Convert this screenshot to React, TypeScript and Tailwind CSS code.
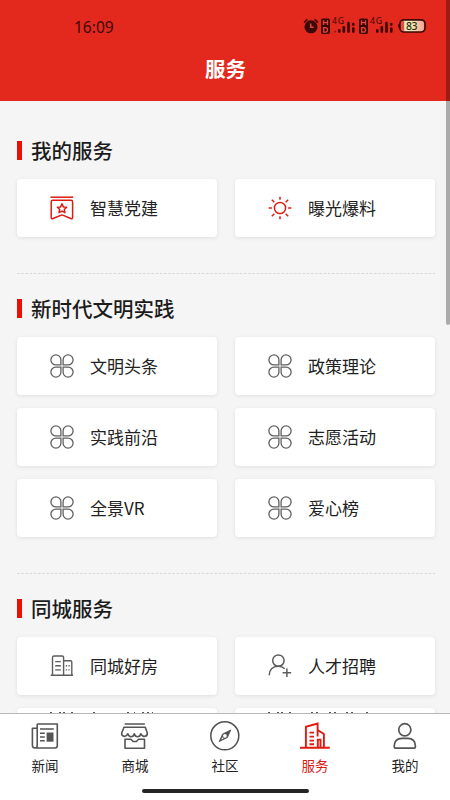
import React from 'react';

const Clover = () => (
  <svg width="24" height="24" viewBox="0 0 24 24" fill="none" stroke="#606060" strokeWidth="1.3">
    <path d="M10.9 10.9H6A5 5 0 1 1 10.9 6z" />
    <path d="M13.1 10.9H18A5 5 0 1 0 13.1 6z" />
    <path d="M10.9 13.1H6A5 5 0 1 0 10.9 18z" />
    <path d="M13.1 13.1H18A5 5 0 1 1 13.1 18z" />
  </svg>
);

const Party = () => (
  <svg width="24" height="24" viewBox="0 0 24 24" fill="none" stroke="#dc1c14" strokeWidth="1.5" strokeLinejoin="round">
    <path d="M.5 1.2H23.2" />
    <path d="M2.8 4.3H21Q22.6 4.3 22.6 5.9V21.3Q22.6 23.3 20.8 22.5L12 18.9L3 22.5Q1.2 23.3 1.2 21.3V5.9Q1.2 4.3 2.8 4.3z" />
    <path d="M12 7.9l1.4 3 3.2.4-2.3 2.2.6 3.2-2.9-1.6-2.9 1.6.6-3.2-2.3-2.2 3.2-.4z" />
  </svg>
);

const Sun = () => (
  <svg width="24" height="24" viewBox="0 0 24 24" fill="none" stroke="#dc1c14" strokeWidth="1.5">
    <circle cx="12" cy="12" r="5.6" />
    <path d="M12 .7v3M12 20.3v3M.7 12h3.2M20.1 12h3.2M3.8 3.8l2.5 2.5M17.7 17.7l2.5 2.5M20.2 3.8l-2.5 2.5M6.3 17.7l-2.5 2.5" />
  </svg>
);

const House = () => (
  <svg width="24" height="24" viewBox="0 0 24 24" fill="none" stroke="#5c5c5c" strokeWidth="1.4" strokeLinejoin="round">
    <path d="M.7 21.3H23M2.5 21.3V3.5Q2.5 2 4 2H12Q13.6 2 13.6 3.5V21.3M13.6 6.8H20.5Q21.8 6.8 21.8 8V21.3M5.2 7.6H10.8M5.2 11.7H10.8M5.2 15.9H10.8M15.8 11.7h1.3M18.4 11.7h1.3M15.8 15.9h1.3M18.4 15.9h1.3" />
  </svg>
);

const Recruit = () => (
  <svg width="24" height="24" viewBox="0 0 24 24" fill="none" stroke="#5c5c5c" strokeWidth="1.5">
    <circle cx="10.4" cy="6.6" r="5.7" />
    <path d="M1.2 21.3C1.2 15.8 4.5 12.3 10.2 12.3C13 12.3 15.2 13.3 16.7 14.8M18.9 14.5V23M14.6 18.8H23.2" />
  </svg>
);

const NewsIcon = () => (
  <svg width="30" height="30" viewBox="0 0 30 30" fill="none" stroke="#555" strokeWidth="1.6" strokeLinejoin="round">
    <path d="M7.2 3H27.3V24.8Q27.3 27 25 27H5.2Q2.4 27 2.4 24.3V7.3H7.2M7.2 3V24.3Q7.2 27 5 27M10 8H23.8M10 12.2H14.8M10 16H14.8M10 19.8H14.8" />
    <path d="M16.6 11.5H23.5V20.7H16.6z" fill="#555" stroke="none" />
  </svg>
);

const ShopIcon = () => (
  <svg width="30" height="30" viewBox="0 0 30 30" fill="none" stroke="#555" strokeWidth="1.6" strokeLinejoin="round">
    <path d="M4.6 3H24.8M4 6.3H25.3L27.3 12C27.8 15.5 22.6 17 20.9 12.8C19.8 16.7 15.3 16.7 14.3 12.8C13.3 16.7 9 16.7 7.8 12.8C6.1 17 1.1 15.5 1.7 12zM5 18.3V27.3H24.5V18.3H18.6L16.4 20.5H13.1L10.9 18.3z" />
  </svg>
);

const CompassIcon = () => (
  <svg width="30" height="30" viewBox="0 0 30 30" fill="none" stroke="#505050" strokeWidth="1.5" strokeLinejoin="round">
    <circle cx="14.8" cy="14.8" r="14" />
    <path d="M20.8 8.9L17.4 16.6L9.2 20.6L12.6 13z" fill="#505050" strokeWidth=".8" />
    <circle cx="14.9" cy="14.8" r="1.9" fill="#fff" stroke="none" />
    <path d="M11.2 18.8l1.4-2.7 1.1 1.2z" fill="#fff" stroke="none" />
  </svg>
);

const ServiceIcon = () => (
  <svg width="30" height="30" viewBox="0 0 30 30" fill="none" stroke="#e01a10" strokeWidth="1.9">
    <path d="M0 26.8H29.8M5.9 26.8V5.8L17.6 2.5V9L23.9 13V26.8M17.6 8.8V15.5M17.8 26.8V18.6H20.5V26.8M9.5 11.6H14M9.5 15.6H14M9.5 19.6H14M9.5 23.3H14" />
  </svg>
);

const MineIcon = () => (
  <svg width="30" height="30" viewBox="0 0 30 30" fill="none" stroke="#555" strokeWidth="1.7" strokeLinejoin="round">
    <circle cx="14.8" cy="8.8" r="6.1" />
    <path d="M6 27.2Q4.1 27.2 4.2 25C4.4 20 7.6 17.3 12 17.3H17.8C22.2 17.3 25.3 20 25.4 25Q25.5 27.2 23.8 27.2z" />
  </svg>
);

const Card = ({ icon, label }: { icon: React.ReactNode; label: string }) => (
  <div className="flex h-[58px] items-center rounded-[4px] bg-white pl-[33px] shadow-[0_1px_4px_rgba(0,0,0,0.09)]">
    {icon}
    <span className="ml-4 text-[17px] leading-6 text-[#222]">{label}</span>
  </div>
);

const PeekCard = ({ marks }: { marks: string }) => (
  <div className="h-[58px] rounded-[4px] bg-white pl-[33px] pt-[4px] shadow-[0_1px_4px_rgba(0,0,0,0.09)]">
    <svg className="block" width="110" height="1" viewBox="0 0 110 1">
      <path d={marks} stroke="#555" strokeWidth="1" />
    </svg>
  </div>
);

const Title = ({ children }: { children: string }) => (
  <h2 className="flex h-[30px] items-center gap-[9px] text-[20.5px] font-medium text-[#1c1c1c]">
    <i className="block h-[19px] w-[5px] bg-[#eb1006]" />
    <span className="leading-[30px]">{children}</span>
  </h2>
);

const Divider = () => (
  <svg className="block h-px w-full" viewBox="0 0 418 1" preserveAspectRatio="none">
    <path d="M0 .5H418" stroke="#d9d9d9" strokeWidth="1" strokeDasharray="2.6 1.6" />
  </svg>
);

const Signal = ({ faint }: { faint?: boolean }) => (
  <svg width="36" height="26" viewBox="0 -4 36 26" fill="#3c0806">
    <rect x="0" y="1.5" width="9" height="15.5" rx="1.8" />
    <path d="M2.5 3.2v4.9M6.5 3.2v4.9M2.5 5.6h4M2.7 10.7v4.5h1.5q2.3 0 2.3-2.25t-2.3-2.25z" fill="none" stroke="#e8453a" strokeWidth="1.3" />
    <text x="11" y="7.4" fontSize="8.6" textLength="12" fontFamily="Noto Sans">4G</text>
    <circle cx="14" cy="14.6" r="1.1" opacity={faint ? 0.45 : 0} />
    <path d="M18.3 13.4v1.2M22.8 10.2v4.4M27.5 6v8.6M32.3 7v.6M32.3 11.6v3" stroke="#3c0806" strokeWidth="2.6" strokeLinecap="round" />
  </svg>
);

const tabs = [
  { label: '新闻', icon: <NewsIcon /> },
  { label: '商城', icon: <ShopIcon /> },
  { label: '社区', icon: <CompassIcon /> },
  { label: '服务', icon: <ServiceIcon />, active: true },
  { label: '我的', icon: <MineIcon /> },
];

export default function App() {
  return (
    <div className="relative flex h-[800px] w-[450px] flex-col overflow-hidden bg-[#f5f5f5] font-['Noto_Sans_CJK_SC',sans-serif]">
      <header className="h-[101px] shrink-0 bg-[#e3281e]">
        <div className="flex h-[52px] items-center pl-[74px]">
          <span className="w-[229px] pt-[2px] font-['Noto_Sans'] text-[15.5px] leading-5 text-[#3c0806]">16:09</span>
          <div className="flex items-center gap-[2px]">
            <svg width="16" height="16" viewBox="0 0 16 16" fill="none" stroke="#3c0806" strokeWidth="1.5">
              <circle cx="8" cy="8.8" r="5.8" fill="#3c0806" />
              <path d="M1.3 4.9Q2 2.5 4.5 1.5M14.7 4.9Q14 2.5 11.5 1.5" />
              <path d="M7.7 5.6V9.3H10.5" stroke="#e8453a" />
            </svg>
            <Signal faint />
            <Signal />
            <svg width="30" height="16" viewBox="0 0 30 16">
              <defs>
                <linearGradient id="battery">
                  <stop offset="0" stopColor="#cdf0cf" />
                  <stop offset=".5" stopColor="#f3e6b0" />
                  <stop offset="1" stopColor="#f59b8f" />
                </linearGradient>
              </defs>
              <rect x="3" y="1.8" width="25" height="12.2" rx="4" fill="url(#battery)" stroke="#3c0806" strokeWidth="1.7" />
              <path d="M4 4Q5 2.8 7.2 2.8V13Q5 13 4 12z" fill="#ed4a3e" />
              <path d="M2.8 4.8Q-.6 8 2.8 11.2z" fill="#3c0806" />
              <text x="9" y="11.9" fontSize="10.5" textLength="11.5" fontWeight="500" fontFamily="Noto Sans" fill="#302b13">83</text>
            </svg>
          </div>
        </div>
        <h1 className="pl-[1px] text-center text-[20.5px] font-bold leading-[32px] text-white">服务</h1>
      </header>

      <main className="min-h-0 flex-1 overflow-hidden pl-[17px] pr-[15px] pt-[34px]">
        <section>
          <Title>我的服务</Title>
          <div className="mt-[14px] grid grid-cols-2 gap-x-[18px] gap-y-[13px]">
            <Card icon={<Party />} label="智慧党建" />
            <Card icon={<Sun />} label="曝光爆料" />
          </div>
        </section>
        <div className="pt-[36px]"><Divider /></div>
        <section className="pt-[19px]">
          <Title>新时代文明实践</Title>
          <div className="mt-[14px] grid grid-cols-2 gap-x-[18px] gap-y-[13px]">
            <Card icon={<Clover />} label="文明头条" />
            <Card icon={<Clover />} label="政策理论" />
            <Card icon={<Clover />} label="实践前沿" />
            <Card icon={<Clover />} label="志愿活动" />
            <Card icon={<Clover />} label="全景VR" />
            <Card icon={<Clover />} label="爱心榜" />
          </div>
        </section>
        <div className="pt-[36px]"><Divider /></div>
        <section className="pt-[19px]">
          <Title>同城服务</Title>
          <div className="mt-[14px] grid grid-cols-2 gap-x-[18px] gap-y-[13px]">
            <Card icon={<House />} label="同城好房" />
            <Card icon={<Recruit />} label="人才招聘" />
            <PeekCard marks="M0 .5h2M9 .5h2M13 .5h2M21 .5h2M43 .5h2M77 .5h2M84 .5h1M92 .5h2M97 .5h2M102 .5h1" />
            <PeekCard marks="M0 .5h2M9 .5h2M13 .5h2M21 .5h2M43 .5h2M48 .5h2M61 .5h2M66 .5h2M78 .5h2M83 .5h2M98 .5h2" />
          </div>
        </section>
      </main>

      <nav className="h-[87px] shrink-0 border-t border-[#b9b9b9] bg-white">
        <div className="flex h-[73px] pt-[7px]">
          {tabs.map((t) => (
            <div key={t.label} className="flex w-[90px] flex-col items-center">
              {t.icon}
              <span className={t.active ? 'mt-[4px] text-[13.5px] leading-5 text-[#d92018]' : 'mt-[4px] text-[13.5px] leading-5 text-[#222]'}>{t.label}</span>
            </div>
          ))}
        </div>
        <div className="mx-auto mt-[2px] h-1 w-[167px] rounded-full bg-[#252525]" />
      </nav>
      <div className="absolute right-0 top-0 h-[325px] w-1 rounded-b-sm bg-black/30" />
    </div>
  );
}
